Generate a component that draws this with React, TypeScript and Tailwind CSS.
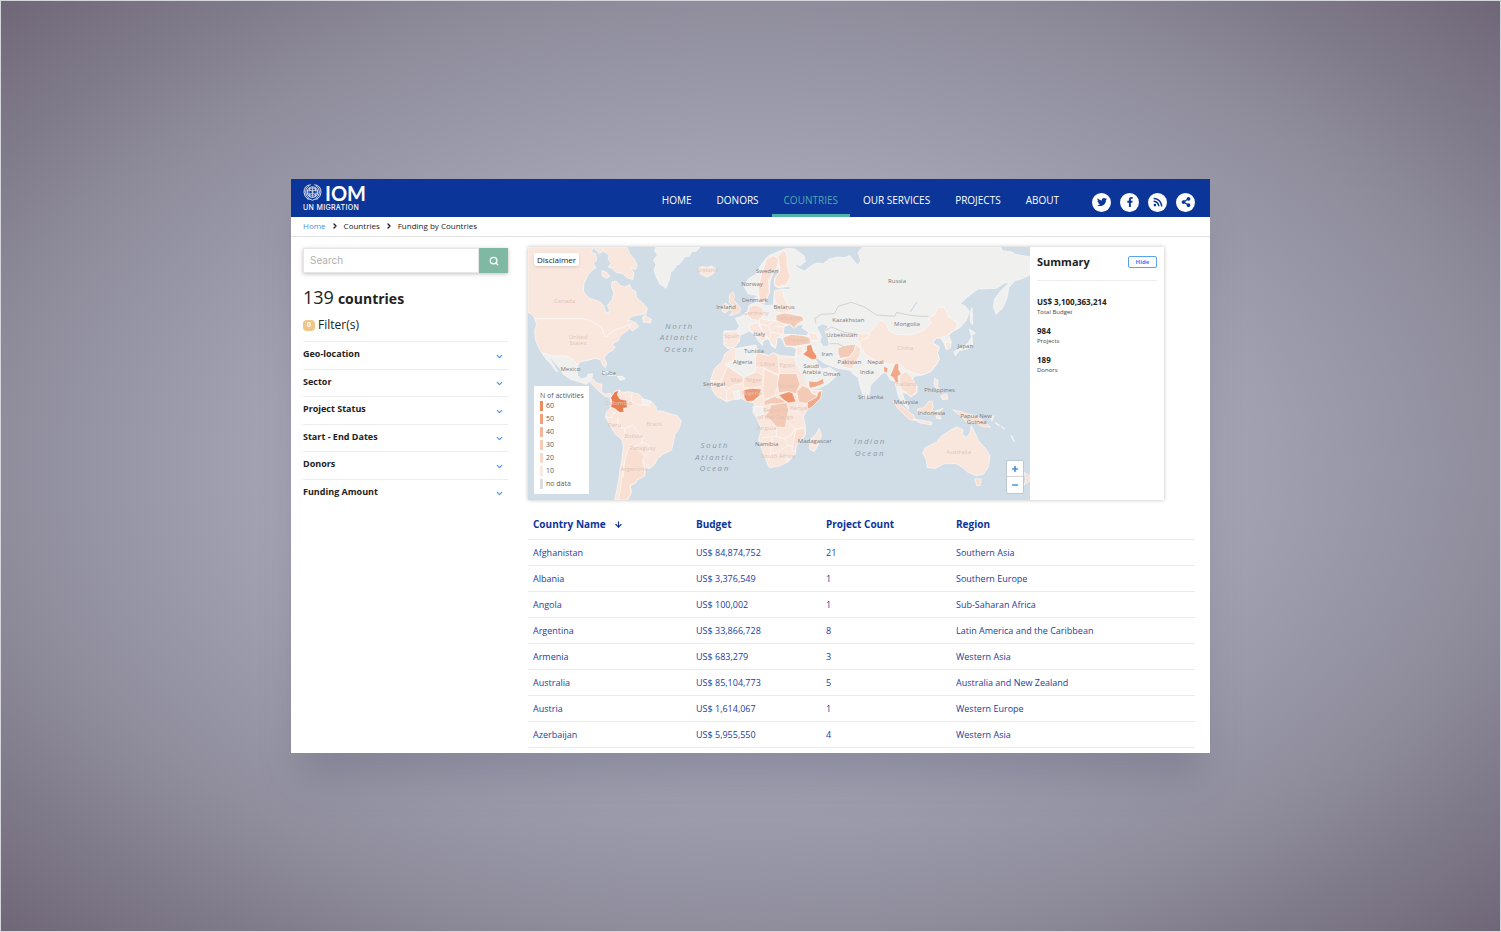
import React, { useState } from 'react';
import { FaFacebookF, FaRss, FaShareAlt, FaTwitter } from 'react-icons/fa';
import { ArrowDown, ChevronDown, ChevronRight, Minus, Plus, Search } from 'lucide-react';

const navItems = ['HOME', 'DONORS', 'COUNTRIES', 'OUR SERVICES', 'PROJECTS', 'ABOUT'];

const socials = [
  { label: 'Twitter', Icon: FaTwitter },
  { label: 'Facebook', Icon: FaFacebookF },
  { label: 'RSS', Icon: FaRss },
  { label: 'Share', Icon: FaShareAlt },
];

const filters = ['Geo-location', 'Sector', 'Project Status', 'Start - End Dates', 'Donors', 'Funding Amount'];

const rows = [
  ['Afghanistan', 'US$ 84,874,752', '21', 'Southern Asia'],
  ['Albania', 'US$ 3,376,549', '1', 'Southern Europe'],
  ['Angola', 'US$ 100,002', '1', 'Sub-Saharan Africa'],
  ['Argentina', 'US$ 33,866,728', '8', 'Latin America and the Caribbean'],
  ['Armenia', 'US$ 683,279', '3', 'Western Asia'],
  ['Australia', 'US$ 85,104,773', '5', 'Australia and New Zealand'],
  ['Austria', 'US$ 1,614,067', '1', 'Western Europe'],
  ['Azerbaijan', 'US$ 5,955,550', '4', 'Western Asia'],
];

const legend = [
  { label: '60', color: 'bg-[#ee8c61]' },
  { label: '50', color: 'bg-[#f1a07c]' },
  { label: '40', color: 'bg-[#f4b698]' },
  { label: '30', color: 'bg-[#f7cab4]' },
  { label: '20', color: 'bg-[#f9d9ca]' },
  { label: '10', color: 'bg-[#fbe8df]' },
  { label: 'no data', color: 'bg-[#dcdcdc]' },
];

const stats = [
  { value: 'US$ 3,100,363,214', label: 'Total Budget' },
  { value: '984', label: 'Projects' },
  { value: '189', label: 'Donors' },
];

const NONE = '#f0f0ef';
const L1 = '#f9e7de';
const L2 = '#f8dfd2';
const L3 = '#f3cab5';
const L4 = '#f1aa89';
const L5 = '#ee9670';
const L6 = '#ea7d50';
const SEA = '#d0dde6';

// [fill, path] in map units, painted in order
const shapes: [string, string][] = [
  // greenland
  [NONE, 'M384 0H516L505 12 492 14 484 27 470 30 456 50 446 55 436 70 428 76 424 98 414 124 404 116 396 112 386 92 378 70 384 52 376 40 388 24 380 10Z'],
  // canada
  [L1, 'M0 0H196L190 14 204 22 206 40 196 48 204 62 192 70 180 84 168 108 166 134 184 154 204 160 218 166 228 178 232 194 242 198 244 188 238 176 252 158 258 138 250 120 252 104 264 102 278 116 292 120 304 112 312 128 322 132 326 152 344 168 358 184 354 200 330 204 312 208 296 222 306 220 316 224 304 234 288 240 262 248 248 258 234 270 228 262 222 244 206 232 188 222 168 215H20L14 204 0 196Z'],
  [L1, 'M222 0H296L304 18 318 36 328 54 322 68 308 62 318 78 314 98 298 92 284 80 264 76 252 64 240 60 250 50 240 36 244 24 228 14Z'],
  [L1, 'M196 0H220L226 12 214 20 206 12ZM222 70L236 76 246 88 234 94 222 86Z'],
  [L1, 'M344 210L352 204 360 212 370 216 368 228 358 226 346 226ZM302 236L322 226 332 238 314 252 306 246Z'],
  // united states
  [L1, 'M20 215H168L188 222 206 232 222 244 228 262 234 270 248 258 262 248 288 240 300 232 306 240 298 252 284 260 276 268 272 280 262 286 252 294 262 300 254 310 240 318 228 332 236 350 232 362 224 354 218 338 202 334 188 338 170 342 156 344 150 354 138 344 128 332 108 326 80 328 56 322 42 318 30 298 22 276 20 250 26 232Z'],
  // mexico and central america
  [NONE, 'M42 318L56 322 80 328 108 326 128 332 138 344 150 354 146 370 150 386 160 396 174 392 180 382 194 380 192 394 184 402 176 412 152 404 126 396 104 380 96 364 84 352 68 332 62 330 78 356 90 374 84 372 66 348 54 336Z'],
  [L1, 'M182 402L196 396 204 408 222 412 220 432 232 442 246 438 252 446 240 450 228 446 210 430 194 414Z'],
  [NONE, 'M220 376L236 374 252 380 264 384 246 386 228 380ZM268 388L284 388 292 396 276 400Z'],
  // south america
  [L1, 'M260 434L274 428 280 436 304 434 318 438 334 442 346 456 372 464 384 480 386 492 404 492 426 500 448 506 460 522 454 544 440 564 436 590 430 610 404 622 388 636 380 652 366 664 352 664 350 686 328 698 322 708 306 716 310 736 298 759H260L266 730 272 700 276 668 282 636 286 600 282 578 262 562 246 534 232 510 236 494 248 482 246 452Z'],
  [NONE, 'M342 456L368 462 364 476 346 474Z'],
  [L2, 'M302 602L318 598 334 612 350 626 344 642 350 662 350 686 328 698 322 708 306 716 310 736 298 759H272L278 720 282 690 290 640Z'],
  ['none', 'M232 510L250 512 262 492 284 498M270 512L268 528 290 548 290 568 282 578M290 546L314 534 330 556 342 572 340 590 318 598M340 586L360 592 366 612 350 626M344 642L366 664M290 640L286 690M312 438L310 462 330 474 346 474'],
  [L6, 'M260 434L272 430 268 444 276 456 296 460 298 482 286 484 288 496 274 496 262 486 248 480 252 464 248 452Z'],
  // iceland, ireland, britain
  [L1, 'M512 64L522 58 536 62 552 56 564 68 556 80 538 90 518 82Z'],
  [L1, 'M584 178L592 168 602 174 602 190 590 198 582 192Z'],
  [L2, 'M604 144L614 134 620 148 616 158 628 172 638 184 634 196 620 202 604 206 614 194 606 186 616 178 604 166Z'],
  // eurasia
  [NONE, 'M800 50L808 62 830 72 850 56 868 48 886 50 904 36 930 30 948 32 966 26 980 44 990 56 998 40 990 16 1004 0H1418L1424 12 1450 14 1462 22 1506 30V84L1480 96 1462 100 1442 122 1438 150 1424 184 1404 202 1396 180 1400 156 1418 132 1444 106 1430 108 1404 124 1350 126 1318 150 1296 170 1312 178 1324 192 1316 218 1296 242 1276 252 1262 264 1270 284 1266 302 1254 306 1248 288 1238 274 1224 272 1214 288 1234 300 1228 318 1234 336 1226 352 1208 374 1182 384 1160 388 1152 398 1168 418 1166 438 1148 450 1138 440 1122 434 1128 456 1140 474 1142 488 1126 470 1112 450 1104 420 1096 400 1088 400 1074 374 1062 380 1046 396 1028 414 1024 442 1010 456 998 424 990 390 978 384 966 370 930 364 902 354 888 348 870 334 858 326 866 344 880 366 906 362 914 368 930 378 920 392 900 410 872 424 846 428 836 402 820 376 804 346 800 330 806 306 790 298 772 298 764 278 756 272 742 270 746 286 742 304 730 296 724 278 708 264 694 248 702 264 718 276 704 282 704 296 694 286 680 264 664 252 648 260 636 264 634 282 620 300 600 304 588 294 588 252 624 252 634 238 622 214 640 208 660 190 664 174 684 166 680 152 692 148 696 170 716 176 736 174 738 150 740 134 760 126 784 128 788 118 750 122 740 116 740 94 756 72 750 62 736 78 726 102 724 138 710 168 700 168 692 146 660 140 648 118 660 96 684 82 700 52 722 26 750 14 776 4 800 6 828 26 832 44 816 56Z'],
  [L2, 'M716 36L736 26 752 36 748 58 734 80 722 100 724 136 712 162 700 168 692 146 690 120 702 78Z'],
  [L2, 'M750 28L768 10 776 22 778 58 786 88 776 112 750 120 738 110 742 92 756 72Z'],
  [L1, 'M740 130L764 128 768 150 780 176 790 190 770 200 742 194 738 180 746 170 738 152Z'],
  [L2, 'M664 180L682 174 704 182 706 204 694 222 670 216 658 204Z'],
  [L1, 'M588 254L624 252 636 264 634 282 620 300 600 304 588 294Z'],
  [L1, 'M664 234L690 226 696 240 716 274 704 282 682 262 666 250Z'],
  [L1, 'M694 214L720 220 744 222 768 228 774 246 764 262 748 272 742 304 724 280 704 250 694 232Z'],
  ['none', 'M694 232L720 236 740 222M720 236L728 254 764 262M728 254L724 280M740 238L768 240'],
  [L3, 'M744 204L770 198 790 202 822 208 828 220 808 230 800 244 786 232 766 230 744 220Z'],
  [L3, 'M764 272L790 262 820 264 846 272 848 290 820 294 800 298 772 296Z'],
  [L1, 'M838 256L864 260 874 280 850 280ZM806 300L826 298 822 320 806 330Z'],
  [SEA, 'M766 262L768 240 784 232 798 244 812 234 828 230 822 242 842 256 836 266 808 264 788 262Z'],
  [SEA, 'M866 240L884 230 902 238 890 252 900 272 904 296 886 300 876 284 880 268Z'],
  [SEA, 'M1142 196L1166 160 1170 166 1150 196Z'],
  [L5, 'M836 296L850 292 856 312 866 326 866 336 852 338 824 322 836 312Z'],
  [L4, 'M842 402L866 404 886 394 888 410 862 420 844 424Z'],
  [L3, 'M930 302L958 294 984 292 978 312 964 330 936 334 930 318Z'],
  [L1, 'M984 260L1012 258 1028 262 1012 280 990 284Z'],
  [L2, 'M940 336L964 330 978 312 984 294 998 304 996 326 984 344 972 366 946 360Z'],
  [L1, 'M1028 252L1044 234 1060 218 1076 232 1082 250 1104 262 1150 264 1186 250 1210 228 1202 214 1222 202 1228 182 1248 180 1262 210 1290 228 1282 248 1262 262 1238 274 1224 272 1214 288 1234 300 1228 318 1234 336 1226 352 1208 374 1182 384 1160 378 1136 370 1114 350 1088 352 1050 344 1016 326 998 300 994 284 1018 272Z'],
  [L1, 'M1016 336L1054 350 1052 358 1020 346Z'],
  [L4, 'M1066 358L1080 362 1078 378 1068 376Z'],
  [L4, 'M1100 352L1112 348 1112 368 1120 380 1110 388 1112 408 1102 406 1096 392 1086 386 1094 368Z'],
  [L2, 'M1116 384L1132 374 1148 386 1166 416 1166 436 1148 448 1138 438 1122 430 1114 406Z'],
  [L1, 'M1252 284L1266 286 1268 302 1256 308Z'],
  // africa
  [L1, 'M608 306L640 302 684 294 690 316 722 326 736 318 760 326 792 328 802 332 806 352 822 386 838 412 848 430 882 430 876 454 838 488 826 508 832 536 832 564 804 596 802 620 782 644 752 658 724 662 714 640 700 604 692 578 700 546 688 516 674 496 680 468 654 462 636 452 596 464 566 448 552 428 548 398 560 364 582 344 590 322Z'],
  [NONE, 'M624 310L640 302 682 296 678 322 684 352 682 374 646 390 592 352 622 338Z'],
  [NONE, 'M616 434L632 430 636 456 622 458ZM674 480L704 478 706 500 690 510Z'],
  [L2, 'M682 330L690 318 722 326 736 318 750 326 754 384 706 362 682 360Z'],
  [L2, 'M598 358L646 390 640 410 616 414 592 430 580 404Z'],
  [L2, 'M646 392L684 374 706 384 704 416 672 424 646 422Z'],
  [L2, 'M708 366L752 386 748 420 740 446 708 458 704 430Z'],
  [L3, 'M754 380H806L816 412 804 440 780 434 752 438 748 410Z'],
  [L5, 'M648 428L672 424 700 426 694 446 676 462 656 464 648 450Z'],
  [L5, 'M752 444L782 434 794 438 804 464 782 468 768 460Z'],
  [L3, 'M806 434L824 416 842 424 852 440 872 446 846 470 812 466Z'],
  [L4, 'M882 430L878 454 852 480 838 488 838 466 866 450 870 436Z'],
  [L3, 'M708 462L740 448 772 462 768 474 732 470 708 476Z'],
  [L3, 'M728 474L776 466 782 490 776 516 772 542 746 540 724 516 708 510 722 494Z'],
  [L2, 'M804 548L830 542 832 564 804 596 802 612 792 610 798 576Z'],
  ['none', 'M804 332L754 332M784 490L808 496 826 508M776 518L800 546 830 542M702 544L744 540 746 568 702 572M746 568L770 576 792 560 800 546M732 572L728 620 722 640M728 620L752 614 780 594 770 576M780 594L798 600M772 628L784 634 778 642ZM596 430L596 464M566 416L600 420 616 436M548 400L578 404M808 470L806 494M676 464L706 440'],
  [L1, 'M874 544L880 566 870 596 858 614 844 606 848 576 864 562Z'],
  // maritime asia and oceania
  [L2, 'M1096 464L1116 472 1140 492 1158 506 1162 520 1146 518 1126 500 1110 484Z'],
  [L1, 'M1156 516L1184 520 1212 526 1210 534 1176 528Z'],
  [L2, 'M1168 486L1188 482 1202 464 1212 462 1216 480 1206 504 1182 504 1172 498Z'],
  [L1, 'M1222 492L1246 484 1230 498 1240 516 1226 514ZM1220 394L1230 400 1228 420 1240 430 1226 428 1218 412ZM1238 446L1256 440 1260 456 1244 458Z'],
  [L2, 'M1274 488L1298 494 1318 500 1344 506 1366 522 1388 540 1366 540 1346 528 1318 528 1300 508Z'],
  [L1, 'M1386 510L1398 506 1392 522ZM1402 526L1416 536 1406 532ZM1420 538L1430 546 1424 544ZM1450 564L1460 584 1454 578Z'],
  [NONE, 'M1324 246L1342 258 1330 266ZM1332 268L1334 292 1318 306 1294 310 1282 326 1278 314 1300 302 1320 288ZM1332 182L1334 232 1328 228 1326 200Z'],
  [L1, 'M1270 548L1286 540 1306 548 1302 562 1316 572 1326 556 1330 536 1342 560 1352 582 1372 604 1386 626 1382 658 1366 682 1344 686 1320 676 1302 660 1284 650 1248 650 1222 664 1198 662 1194 636 1184 618 1192 602 1224 586 1242 566Z'],
  [L2, 'M1340 696L1360 696 1356 716 1346 716Z'],
  [L2, 'M1488 676L1506 686V700L1488 714 1494 696Z'],
];

const labels: [string, number, number, boolean?][] = [
  ['Canada', 110, 168, true],
  ['United', 150, 275, true],
  ['States', 150, 295, true],
  ['Mexico', 127, 373],
  ['Iceland', 540, 76, true],
  ['Sweden', 717, 77],
  ['Norway', 672, 116],
  ['Denmark', 680, 165],
  ['Ireland', 594, 187],
  ['Germany', 684, 204, true],
  ['Belarus', 768, 186],
  ['Ukraine', 785, 218, true],
  ['Spain', 612, 273, true],
  ['Italy', 694, 266],
  ['Turkey', 805, 286, true],
  ['Tunisia', 678, 317],
  ['Algeria', 644, 350],
  ['Libya', 719, 357, true],
  ['Egypt', 778, 360, true],
  ['Mali', 626, 406, true],
  ['Niger', 677, 406, true],
  ['Sudan', 778, 424, true],
  ['Senegal', 558, 417],
  ['Nigeria', 672, 445, true],
  ['Republic', 742, 496, true],
  ['of the Congo', 742, 516, true],
  ['Angola', 716, 550, true],
  ['Namibia', 716, 596],
  ['South Africa', 750, 634, true],
  ['Kenya', 812, 488, true],
  ['Madagascar', 860, 587],
  ['Russia', 1107, 109],
  ['Kazakhstan', 961, 226],
  ['Uzbekistan', 941, 270],
  ['Mongolia', 1137, 236],
  ['China', 1132, 308, true],
  ['Japan', 1312, 304],
  ['Iran', 897, 326],
  ['Saudi', 850, 362],
  ['Arabia', 851, 382],
  ['Oman', 911, 387],
  ['Pakistan', 964, 351],
  ['Nepal', 1042, 351],
  ['India', 1017, 382],
  ['Sri Lanka', 1028, 455],
  ['Thailand', 1130, 417, true],
  ['Philippines', 1235, 435],
  ['Malaysia', 1134, 470],
  ['Indonesia', 1210, 503],
  ['Papua New', 1344, 512],
  ['Guinea', 1346, 532],
  ['Australia', 1292, 620, true],
  ['Colombia', 272, 473, true],
  ['Brazil', 378, 538, true],
  ['Peru', 260, 541, true],
  ['Bolivia', 316, 574, true],
  ['Paraguay', 344, 609, true],
  ['Argentina', 318, 671, true],
  ['Cuba', 242, 385],
];

const oceans: [string, number, number][] = [
  ['North', 454, 245],
  ['Atlantic', 454, 280],
  ['Ocean', 454, 316],
  ['South', 560, 602],
  ['Atlantic', 560, 638],
  ['Ocean', 560, 671],
  ['Indian', 1026, 591],
  ['Ocean', 1026, 627],
];

function WorldMap() {
  return (
    <svg viewBox="0 0 1506 759" preserveAspectRatio="xMidYMid slice" className="block h-full w-full" role="img" aria-label="Activities by country">
      <rect width="1506" height="759" fill={SEA} />
      <g stroke="#fdf9f7" strokeWidth="2" strokeLinejoin="round">
        {shapes.map(([fill, d], i) => (
          <path key={i} d={d} fill={fill} />
        ))}
      </g>
      <path
        d="M860 214L880 202 920 200 930 178 970 166 1010 180 1046 204 1074 206 1100 208 1106 196 1140 204 1174 208 1202 208M860 214L864 230M890 252L910 240 950 256 990 262M904 290L930 290 950 300"
        fill="none"
        stroke="#c4c4c4"
        strokeWidth="2"
      />
      <g textAnchor="middle" fontSize="18">
        {labels.map(([text, x, y, faint]) => (
          <text key={text} x={x} y={y} fill={faint ? '#dfc4ba' : '#7b7b7b'} className={faint ? 'font-normal' : 'font-medium'}>
            {text}
          </text>
        ))}
      </g>
      <g textAnchor="middle" fontSize="24" fill="#8d9ba6" className="italic tracking-[0.2em]">
        {oceans.map(([text, x, y]) => (
          <text key={`${x}-${y}`} x={x} y={y}>
            {text}
          </text>
        ))}
      </g>
    </svg>
  );
}

function Logo() {
  return (
    <a href="#" className="flex flex-col pb-1 text-white" aria-label="IOM UN Migration">
      <span className="flex items-center gap-[3px]">
        <svg viewBox="0 0 54 48" className="h-[17px] w-[19px]" fill="none" stroke="currentColor" strokeWidth="2.5">
          <circle cx="27" cy="23" r="15" />
          <path d="M13 18H41M13 28H41M18 11Q27 17 36 11M18 35Q27 29 36 35M27 8V38M20 10Q13 23 20 36M34 10Q41 23 34 36M16 12L38 34M38 12L16 34" strokeWidth="1.6" />
          <path d="M22 2Q2 4 3 24Q4 36 14 43M17 5Q6 13 8 27Q10 36 18 41M32 2Q52 4 51 24Q50 36 40 43M37 5Q48 13 46 27Q44 36 36 41M12 42Q20 42 27 46Q34 42 42 42" />
        </svg>
        <span className="font-['Lato',sans-serif] text-[20px] leading-[22px] font-bold">IOM</span>
      </span>
      <span className="font-['Inter',sans-serif] text-[7px] leading-[7px] font-medium tracking-wider">UN MIGRATION</span>
    </a>
  );
}

function Header() {
  return (
    <header className="flex h-[38px] items-center justify-between bg-[#0b3599] pr-[15px] pl-3">
      <Logo />
      <div className="flex h-full items-center">
        <nav className="flex h-full gap-px">
          {navItems.map((item) => (
            <a
              key={item}
              href="#"
              className={
                item === 'COUNTRIES'
                  ? 'flex items-center border-b-[3px] border-[#50b3a8] px-3 pt-2 text-[10px] font-medium text-[#4fa9ad]'
                  : 'flex items-center border-b-[3px] border-transparent px-3 pt-2 text-[10px] font-medium text-white'
              }
            >
              {item}
            </a>
          ))}
        </nav>
        <div className="mt-2 ml-[21px] flex gap-[9px]">
          {socials.map(({ label, Icon }) => (
            <a key={label} href="#" aria-label={label} className="flex size-[19px] items-center justify-center rounded-full bg-white text-[#0b3599]">
              <Icon size={10} />
            </a>
          ))}
        </div>
      </div>
    </header>
  );
}

function Sidebar() {
  return (
    <aside className="w-[205px] shrink-0 pt-px">
      <form className="flex h-[25px] shadow-[0_1px_4px_rgba(0,0,0,0.25)]" onSubmit={(e) => e.preventDefault()}>
        <input
          type="text"
          aria-label="Search"
          placeholder="Search"
          className="min-w-0 flex-1 border border-[#e6e6e6] bg-white px-1.5 font-['Inter',sans-serif] text-[10px] outline-none placeholder:text-[#b0b0b0]"
        />
        <button type="submit" aria-label="Submit search" className="flex w-[29px] items-center justify-center bg-[#80b9a3] text-white">
          <Search size={10} strokeWidth={3} />
        </button>
      </form>
      <h1 className="mt-2.5 flex items-baseline gap-1 text-[14px] leading-7 font-bold">
        <span className="text-[18px] font-normal">139</span>
        countries
      </h1>
      <div className="mt-1 flex items-center gap-[3px] text-[12px] leading-4">
        <span className="flex h-[11px] w-3 items-center justify-center rounded bg-[#f0c48a] text-[7px] font-bold text-white">0</span>
        Filter(s)
      </div>
      <div className="mt-2 grid h-[165px] grid-rows-6">
        {filters.map((filter) => (
          <button key={filter} type="button" className="flex items-center justify-between border-t border-[#ededed] pr-1 pb-[3px] text-[9px] font-bold">
            {filter}
            <ChevronDown size={9} strokeWidth={3} className="mt-1 text-[#4a90e2]" />
          </button>
        ))}
      </div>
    </aside>
  );
}

function MapCard() {
  const [open, setOpen] = useState(true);

  return (
    <section className="mr-[31px] flex h-[253px] shadow-[0_0_4px_rgba(0,0,0,0.25)]">
      <div className="relative min-w-0 flex-1">
        <WorldMap />
        <button type="button" className="absolute top-[6px] left-[6px] rounded-xs bg-white px-[3px] text-[8px] leading-[13px] shadow">
          Disclaimer
        </button>
        <div className="absolute bottom-[6px] left-[6px] w-[55px] bg-white pt-[7px] pb-1 pl-1.5 text-[7px] text-[#5c5c5c]">
          <p className="leading-[6px]">N of activities</p>
          <ul>
            {legend.map(({ label, color }) => (
              <li key={label} className="flex h-[13px] items-center gap-[3px] leading-[10px]">
                <span className={`h-2.5 w-[3px] ${color}`} />
                {label}
              </li>
            ))}
          </ul>
        </div>
        <div className="absolute right-[6px] bottom-[6px] flex flex-col rounded-xs border border-[#bfc8cf] bg-white text-[#4a90d2]">
          <button type="button" aria-label="Zoom in" className="flex size-4 items-center justify-center border-b border-[#d5d5d5]">
            <Plus size={8} strokeWidth={5} />
          </button>
          <button type="button" aria-label="Zoom out" className="flex size-4 items-center justify-center">
            <Minus size={8} strokeWidth={5} />
          </button>
        </div>
      </div>
      <div className="w-[134px] shrink-0 bg-white px-[7px]">
        <div className="flex h-[34px] items-center justify-between border-b border-[#ededed] pb-1">
          <h2 className="text-[11px] leading-4 font-bold">Summary</h2>
          <button
            type="button"
            onClick={() => setOpen(!open)}
            className="h-3 w-[29px] rounded-xs border border-[#5aa0f5] text-[6px] leading-[10px] font-bold text-[#2f86f6]"
          >
            {open ? 'Hide' : 'Show'}
          </button>
        </div>
        {open && (
          <dl className="mt-[15px] flex flex-col gap-2">
            {stats.map(({ value, label }) => (
              <div key={label} className="flex flex-col-reverse">
                <dt className="text-[6px] leading-[9px] text-[#444]">{label}</dt>
                <dd className="text-[8px] leading-3 font-bold">{value}</dd>
              </div>
            ))}
          </dl>
        )}
      </div>
    </section>
  );
}

function CountryTable() {
  return (
    <table className="mt-2 w-full table-fixed border-collapse text-left text-[9px] text-[#1b3d9e]">
      <colgroup>
        <col className="w-[163px]" />
        <col className="w-[130px]" />
        <col className="w-[130px]" />
        <col />
      </colgroup>
      <thead>
        <tr className="h-[31px] border-b border-[#ebebeb] text-[10px] text-[#0b3599]">
          <th className="p-0 pt-px pl-[5px]">
            <button type="button" className="flex items-center gap-2 font-bold">
              Country Name
              <ArrowDown size={9} strokeWidth={3} />
            </button>
          </th>
          <th className="p-0 pt-px pl-[5px]">Budget</th>
          <th className="p-0 pt-px pl-[5px]">Project Count</th>
          <th className="p-0 pt-px pl-[5px]">Region</th>
        </tr>
      </thead>
      <tbody>
        {rows.map((row) => (
          <tr key={row[0]} className="h-[26px] border-b border-[#ebebeb]">
            {row.map((cell, i) => (
              <td key={i} className="p-0 pl-[5px]">
                {i === 0 ? <a href="#">{cell}</a> : cell}
              </td>
            ))}
          </tr>
        ))}
      </tbody>
    </table>
  );
}

export default function App() {
  return (
    <div className="flex min-h-screen items-center justify-center border border-[#d5d5dc] bg-[radial-gradient(ellipse_at_center,#acacbd_0%,#a5a5b6_42%,#908e9d_70%,#6f6778_100%)] font-['Open_Sans',sans-serif] text-[#222]">
      <div className="w-full max-w-[919px] bg-white pb-[5px] shadow-[0_32px_36px_-8px_rgba(70,70,95,0.25)]">
        <Header />
        <nav aria-label="Breadcrumb" className="flex h-5 items-center gap-[5px] border-b border-[#e2e2e2] pb-0.5 pl-3 text-[8px]">
          <a href="#" className="text-[#4a8fe0]">
            Home
          </a>
          <ChevronRight size={8} strokeWidth={4} />
          <a href="#">Countries</a>
          <ChevronRight size={8} strokeWidth={4} />
          <span>Funding by Countries</span>
        </nav>
        <div className="flex gap-5 pt-2.5 pr-[15px] pl-3">
          <Sidebar />
          <main className="min-w-0 flex-1">
            <MapCard />
            <CountryTable />
          </main>
        </div>
      </div>
    </div>
  );
}
